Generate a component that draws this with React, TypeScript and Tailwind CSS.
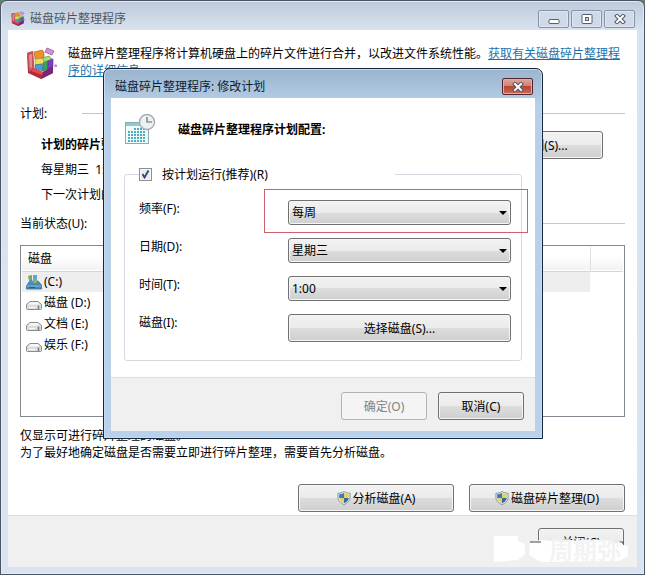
import type { ReactNode } from 'react';

const drives = [
  { name: '(C:)', system: true },
  { name: '磁盘 (D:)', system: false },
  { name: '文档 (E:)', system: false },
  { name: '娱乐 (F:)', system: false },
];

const DefragIcon = ({ className }: { className: string }) => (
  <svg viewBox="0 0 32 32" className={className} aria-hidden="true">
    <path d="M1 6L7 4L8 21L17 25L27 19L27 26L15 32L2 26Z" fill="#b02b3c" />
    <path d="M1 6L7 4L8 21L3 25Z" fill="#c9545c" />
    <path d="M3 8L6 7L6 20L4 22Z" fill="#dd8f92" />
    <path d="M15 32L17 25L27 19V26Z" fill="#7c2578" />
    <path d="M8 21L17 25L16 28L5 24Z" fill="#e04c50" />
    <path d="M8 5L16 3L18 5V11L9 12Z" fill="#ef8f2a" stroke="#a85a28" strokeWidth=".6" />
    <path d="M9 12L18 11V17L9 18Z" fill="#f1dd50" stroke="#a08a30" strokeWidth=".6" />
    <path d="M16 11L23 9L26 12L19 15Z" fill="#a4db72" stroke="#538a3c" strokeWidth=".6" />
    <path d="M9 18L16 17L17 24L9 21Z" fill="#45a0d8" stroke="#2a5f96" strokeWidth=".6" />
    <path d="M17 16L22 14V22L17 24Z" fill="#37a35d" stroke="#28704a" strokeWidth=".6" />
    <path d="M22 14L27 12V19L22 22Z" fill="#7b40c0" stroke="#54288c" strokeWidth=".6" />
    <path d="M21 1L28 4L26 8L19 5Z" fill="#cf92d8" stroke="#9a55a8" strokeWidth=".8" />
    <path d="M29 17L31 18L31 20L28 20Z" fill="#b98bd8" />
  </svg>
);

const ScheduleIcon = () => (
  <svg viewBox="0 0 31 31" className="h-[31px] w-[31px] shrink-0" aria-hidden="true">
    <rect x=".5" y="8.500" width="23" height="21" fill="#f3fbfc" stroke="#8fa9ae" />
    <rect x="1" y="9" width="22" height="3" fill="#8fc9d6" />
    {[15, 18, 21, 24, 27].map((y) => (
      <path key={y} d={`M${y === 15 ? 9 : 3} ${y}H21`} stroke="#4bb0bd" strokeWidth="2" strokeDasharray="2 1" />
    ))}
    <circle cx="22" cy="8" r="7.5" fill="#edf1f2" stroke="#a3adb0" strokeWidth="1.4" />
    <path d="M22 3V8H27" fill="none" stroke="#5f6c72" strokeWidth="1.2" />
  </svg>
);

const ShieldIcon = () => (
  <svg viewBox="0 0 16 16" className="h-[16px] w-[14px] shrink-0" aria-hidden="true">
    <path d="M8 .5C6 2 3.500 2.500 1 2.500V7C1 11 4 14 8 15.500C12 14 15 11 15 7V2.500C12.500 2.500 10 2 8 .5Z" fill="#dfe7ea" stroke="#7d8f9b" />
    <path d="M8 2.200C6 3.200 4.200 3.700 2.500 3.800V8H8Z" fill="#3f78b4" />
    <path d="M8 2.200C10 3.200 11.800 3.700 13.500 3.800V8H8Z" fill="#e3d366" />
    <path d="M2.600 8H8V13.900C5 12.800 3 11 2.600 8Z" fill="#e3d366" />
    <path d="M13.400 8H8V13.900C11 12.800 13 11 13.400 8Z" fill="#35689c" />
  </svg>
);

const DriveIcon = ({ system }: { system: boolean }) =>
  system ? (
    <svg viewBox="0 0 16 16" className="h-[16px] w-[16px]" aria-hidden="true">
      <path d="M3 8L12 7L15.500 11V15H.5V12Z" fill="#4a89b5" stroke="#356d95" strokeWidth=".8" />
      <path d="M1 12H15" stroke="#82bbe0" />
      <path d="M3 13.500H9" stroke="#2b5d85" />
      <path d="M2 2L6 1L6 5L3 6Z" fill="#74a94f" />
      <path d="M7 1L11 1L11 5L7 5Z" fill="#5aa9cf" />
      <path d="M3 6L6 5L7 9L4 9Z" fill="#3e94c4" />
      <path d="M7 5H11L11 9L7 9Z" fill="#8fae7c" />
    </svg>
  ) : (
    <svg viewBox="0 0 16 16" className="h-[16px] w-[16px]" aria-hidden="true">
      <path d="M4 6.500H12L15.500 9.500V13.500Q15.500 14.500 14.500 14.500H1.500Q.5 14.500 .5 13.500V9.500Z" fill="#dcdcdc" stroke="#8b8b8b" />
      <path d="M4.500 7H11.500L14 9.500H2Z" fill="#f7f7f7" />
      <path d="M3 12.500H9" stroke="#f8f8f8" />
      <path d="M12.500 10.500V14" stroke="#6f8076" strokeWidth="1.500" />
    </svg>
  );

type ButtonProps = { children: ReactNode; className?: string; disabled?: boolean };

const Button = ({ children, className = '', disabled }: ButtonProps) => (
  <button
    type="button"
    disabled={disabled}
    className={`flex h-[28px] items-center justify-center gap-[2px] rounded-[3px] border border-[#707070] bg-[linear-gradient(#f2f2f2,#ebebeb_50%,#dddddd_50%,#cfcfcf)] shadow-[inset_0_0_0_1px_#f6f6f6] disabled:border-[#b0b2b5] disabled:bg-[#f4f4f4] disabled:bg-none disabled:text-[#838383] ${className}`}
  >
    {children}
  </button>
);

type SelectRowProps = { id: string; label: string; options: string[] };

const SelectRow = ({ id, label, options }: SelectRowProps) => (
  <div className="flex items-start">
    <label htmlFor={id} className="w-[149px] shrink-0">
      {label}
    </label>
    <div className="relative flex-1">
      <select
        id={id}
        className="block h-[25px] w-full appearance-none rounded-[3px] border border-[#707070] bg-[linear-gradient(#f2f2f2,#ebebeb_50%,#dddddd_50%,#cfcfcf)] px-[3px] shadow-[inset_0_0_0_1px_#f6f6f6]"
      >
        {options.map((option) => (
          <option key={option}>{option}</option>
        ))}
      </select>
      <svg viewBox="0 0 8 4" className="pointer-events-none absolute top-[11px] right-[4px] h-[4px] w-[8px]" aria-hidden="true">
        <path d="M0 0H8L4 4Z" fill="#000" />
      </svg>
    </div>
  </div>
);

const captionButton =
  'flex h-[18px] w-[31px] items-center justify-center rounded-[2px] border border-[#8593a8] bg-[#cfd9e7] shadow-[inset_0_0_0_1px_#dfe6f0]';

const CloseGlyph = () => (
  <svg viewBox="0 0 12 10" className="h-[10px] w-[12px]" aria-hidden="true">
    <path d="M3 2L9 8M9 2L3 8" stroke="#4e5668" strokeWidth="4" strokeLinecap="square" />
    <path d="M3 2L9 8M9 2L3 8" stroke="#fff" strokeWidth="2" strokeLinecap="square" />
  </svg>
);

const GroupHeading = ({ children, className }: { children: ReactNode; className: string }) => (
  <div className={`flex items-center gap-[35px] ${className}`}>
    <h2>{children}</h2>
    <div className="h-px flex-1 bg-[#c6c6c6]" />
  </div>
);

const ScheduleDialog = () => (
  <section
    role="dialog"
    aria-labelledby="dialog-title"
    className="absolute top-[67px] left-[102px] w-[440px] rounded-t-[7px] border border-[#14283c] bg-linear-to-b from-[#9bb5cf] from-0% via-[#b8cfe9] via-10% to-[#b9d1ea] px-[7px] pb-[7px] shadow-[inset_0_0_0_1px_#c9dced]"
  >
    <header className="flex h-[29px] items-center justify-between pt-[6px] pr-[2px] pl-[4px]">
      <h2 id="dialog-title" className="text-[#0c1c30]">磁盘碎片整理程序: 修改计划</h2>
      <button
        type="button"
        aria-label="关闭"
        className="flex h-[17px] w-[31px] items-center justify-center rounded-[2px] border border-[#4f2630] bg-[linear-gradient(#dfa69c,#cf7f72_50%,#b8452f_50%,#c8695a)] shadow-[inset_0_0_0_1px_#e3aba3]"
      >
        <CloseGlyph />
      </button>
    </header>
    <form className="bg-white">
      <div className="px-[13px] py-[16px]">
        <div className="flex items-center gap-[22px] pl-[1px]">
          <ScheduleIcon />
          <h3 className="font-bold">磁盘碎片整理程序计划配置:</h3>
        </div>
        <fieldset className="relative mt-[21px] rounded-[3px] border border-[#d5dae2] pr-[10px] pb-[18px] pl-[14px]">
          <legend className="flex w-[256px] items-center gap-[10px]">
            <span className="relative flex h-[13px] w-[13px]">
              <input
                id="scheduled"
                type="checkbox"
                defaultChecked
                className="peer h-[13px] w-[13px] appearance-none border border-[#8b8f94] bg-[#e8eaef] shadow-[inset_0_0_0_1px_#f8f8f8]"
              />
              <svg viewBox="0 0 13 13" className="pointer-events-none absolute inset-0 hidden h-[13px] w-[13px] peer-checked:block" aria-hidden="true">
                <path d="M3.500 6L5.500 9.500L9.500 2.500" fill="none" stroke="#33417c" strokeWidth="1.800" />
              </svg>
            </span>
            <label htmlFor="scheduled">按计划运行(推荐)(R)</label>
          </legend>
          <div className="flex flex-col gap-[13px] pt-[17px]">
            <SelectRow id="frequency" label="频率(F):" options={['每周', '每天', '每月']} />
            <SelectRow id="day" label="日期(D):" options={['星期三', '星期四', '星期五']} />
            <SelectRow id="time" label="时间(T):" options={['1:00', '2:00', '3:00']} />
            <div className="flex items-start">
              <span className="w-[149px] shrink-0">磁盘(I):</span>
              <Button className="flex-1">选择磁盘(S)...</Button>
            </div>
          </div>
          <div className="pointer-events-none absolute top-[6px] -right-[7px] left-[139px] h-[44px] border border-[#d06068]" />
        </fieldset>
      </div>
      <footer className="flex justify-end gap-[11px] border-t border-[#dfdfdf] bg-[#f0f0f0] px-[11px] pt-[14px] pb-[11px]">
        <Button className="w-[86px]" disabled>
          确定(O)
        </Button>
        <Button className="w-[86px]">取消(C)</Button>
      </footer>
    </form>
  </section>
);

export default function App() {
  return (
    <div className="bg-[#64806f] font-['Noto_Sans','Noto_Sans_CJK_SC',sans-serif] text-[12px] leading-[17px] text-black">
      <main className="relative flex min-h-screen flex-col rounded-t-[7px] border border-[#4a5464] bg-linear-to-b from-[#bdc9da] from-0% via-[#d8e3ef] via-5% to-[#d9e4f0] px-[7px] pb-[7px] shadow-[inset_0_0_0_1px_#e3eaf2]">
        <header className="flex h-[29px] items-center justify-between pt-[6px] pr-[2px] pl-[3px]">
          <div className="flex items-center gap-[4px] text-[#4c5765]">
            <DefragIcon className="h-[15px] w-[15px]" />
            <h1>磁盘碎片整理程序</h1>
          </div>
          <div className="flex gap-[2px]">
            <button type="button" aria-label="最小化" className={captionButton}>
              <svg viewBox="0 0 12 10" className="h-[10px] w-[12px]" aria-hidden="true">
                <rect x="1" y="5.500" width="10" height="4" rx="1" fill="#fff" stroke="#565e70" />
              </svg>
            </button>
            <button type="button" aria-label="最大化" className={captionButton}>
              <svg viewBox="0 0 12 10" className="h-[10px] w-[12px]" aria-hidden="true">
                <rect x="1" y=".5" width="10" height="9" rx="1" fill="#fff" stroke="#565e70" />
                <rect x="4.500" y="3.500" width="3" height="3" fill="#cfd9e7" stroke="#565e70" />
              </svg>
            </button>
            <button type="button" aria-label="关闭" className={captionButton}>
              <CloseGlyph />
            </button>
          </div>
        </header>

        <div className="flex-1 bg-white px-[12px] pt-[15px] pb-[3px]">
          <div className="flex items-start gap-[10px] pl-[6px]">
            <DefragIcon className="mt-[2px] h-[32px] w-[32px] shrink-0" />
            <p>
              磁盘碎片整理程序将计算机硬盘上的碎片文件进行合并，以改进文件系统性能。
              <a href="#help" className="text-[#1a72ac] underline">获取有关磁盘碎片整理程序的详细信息。</a>
            </p>
          </div>

          <GroupHeading className="mt-[26px]">计划:</GroupHeading>
          <div className="mt-[9px] flex items-start justify-between pr-[22px] pl-[21px]">
            <div className="flex flex-col gap-[8px] pt-[5px]">
              <p className="font-bold">计划的碎片整理已启用</p>
              <p className="whitespace-pre">每星期三  1:00 运行</p>
              <p>下一次计划的运行时间: 星期三 1:00</p>
            </div>
            <Button className="w-[142px]">配置计划(S)...</Button>
          </div>

          <GroupHeading className="mt-[12px]">当前状态(U):</GroupHeading>
          <div className="mt-[13px] h-[172px] border border-[#828790] p-px">
            <table className="w-full border-collapse text-left">
              <thead>
                <tr className="h-[24px] border-b border-[#d5d5d5] bg-linear-to-b from-white from-40% to-[#f1f2f4]">
                  <th className="border-r border-[#dfe0e3] px-[6px] font-normal">磁盘</th>
                  <th className="w-[33px]" />
                </tr>
              </thead>
              <tbody>
                {drives.map((drive) => (
                  <tr key={drive.name} className="h-[21px]">
                    <td className={drive.system ? 'bg-[#eeeeef] pl-[4px]' : 'pl-[4px]'}>
                      <span className="flex items-center gap-[2px]">
                        <DriveIcon system={drive.system} />
                        {drive.name}
                      </span>
                    </td>
                    <td />
                  </tr>
                ))}
              </tbody>
            </table>
          </div>

          <p className="mt-[10px]">仅显示可进行碎片整理的磁盘。</p>
          <p>为了最好地确定磁盘是否需要立即进行碎片整理，需要首先分析磁盘。</p>
          <div className="mt-[23px] flex justify-end gap-[15px]">
            <Button className="w-[156px]">
              <ShieldIcon />
              分析磁盘(A)
            </Button>
            <Button className="w-[156px]">
              <ShieldIcon />
              磁盘碎片整理(D)
            </Button>
          </div>
        </div>

        <footer className="relative flex h-[52px] justify-end border-t border-[#dfdfdf] bg-[#f0f0f0] pt-[12px] pr-[13px]">
          <Button className="w-[86px]">关闭(C)</Button>
          <svg viewBox="0 0 140 30" className="absolute right-[6px] bottom-[4px] h-[30px] w-[140px]" aria-hidden="true">
            <path d="M3 3H27V8L34 11V21L27 27L3 29Z" fill="#fff" />
            <path d="M39 9L50 7L70 9L90 7L110 7L131 9L132 12L137 13V23L128 28L50 29L38 22Z" fill="#fff" />
            <path d="M39 9H50M123 9H132V11" fill="none" stroke="#444" />
            <text x="58" y="26" fontSize="24" fontWeight="bold" fill="#f3f3f3">
              周期弥
            </text>
          </svg>
        </footer>

        <ScheduleDialog />
      </main>
    </div>
  );
}
